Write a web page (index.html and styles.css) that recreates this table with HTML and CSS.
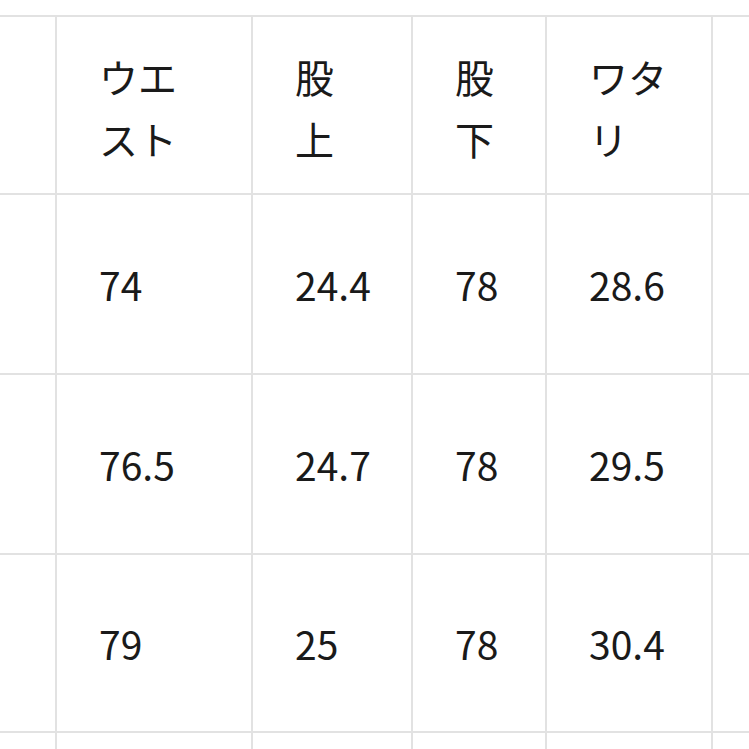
FILE: index.html
```html
<!DOCTYPE html>
<html lang="ja">
<head>
<meta charset="utf-8">
<title>サイズ表</title>
<link rel="stylesheet" href="styles.css">
</head>
<body>
<div class="viewport">
  <div class="size-table">
    <div class="cell"></div>
    <div class="cell head">ウエスト</div>
    <div class="cell head">股上</div>
    <div class="cell head">股下</div>
    <div class="cell head">ワタリ</div>
    <div class="cell"></div>

    <div class="cell"></div>
    <div class="cell">74</div>
    <div class="cell">24.4</div>
    <div class="cell">78</div>
    <div class="cell">28.6</div>
    <div class="cell"></div>

    <div class="cell"></div>
    <div class="cell">76.5</div>
    <div class="cell">24.7</div>
    <div class="cell">78</div>
    <div class="cell">29.5</div>
    <div class="cell"></div>

    <div class="cell"></div>
    <div class="cell">79</div>
    <div class="cell">25</div>
    <div class="cell">78</div>
    <div class="cell">30.4</div>
    <div class="cell"></div>

    <div class="cell"></div>
    <div class="cell"></div>
    <div class="cell"></div>
    <div class="cell"></div>
    <div class="cell"></div>
    <div class="cell"></div>
  </div>
</div>
</body>
</html>
```
FILE: styles.css
```css
html, body {
  margin: 0;
  padding: 0;
  background: #ffffff;
}

.viewport {
  width: 749px;
  height: 749px;
  overflow: hidden;
}

.size-table {
  margin-top: 15px;
  margin-left: -100px;
  padding-top: 2px;
  display: grid;
  grid-template-columns: 155px 194px 158px 132px 164px 200px;
  grid-template-rows: 176px 178px 178px 176px 60px;
  gap: 2px;
  width: max-content;
  background: #e2e2e2;
  font-family: "Noto Sans CJK JP", "Noto Sans", sans-serif;
  font-size: 39px;
  font-weight: 400;
  line-height: 62px;
  color: #1a1a1a;
}

.cell {
  background: #ffffff;
  display: flex;
  align-items: center;
  padding: 0 40px 0 42px;
}

.head {
  padding-top: 4px;
}
```
